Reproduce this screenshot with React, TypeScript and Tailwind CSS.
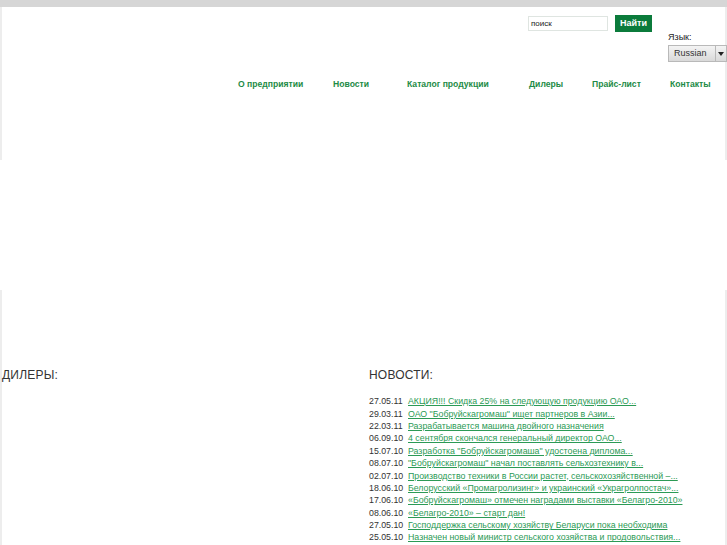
import React from 'react';

const navItems = [
  { label: 'О предприятии', w: 'w-[95px]' },
  { label: 'Новости', w: 'w-[74px]' },
  { label: 'Каталог продукции', w: 'w-[122px]' },
  { label: 'Дилеры', w: 'w-[63px]' },
  { label: 'Прайс-лист', w: 'w-[78px]' },
  { label: 'Контакты', w: 'w-[55px]' },
];

const news = [
  ['27.05.11', 'АКЦИЯ!!! Скидка 25% на следующую продукцию ОАО...'],
  ['29.03.11', 'ОАО "Бобруйскагромаш" ищет партнеров в Азии...'],
  ['22.03.11', 'Разрабатывается машина двойного назначения '],
  ['06.09.10', '4 сентября скончался генеральный директор ОАО...'],
  ['15.07.10', 'Разработка "Бобруйскагромаша" удостоена диплома...'],
  ['08.07.10', '"Бобруйскагромаш" начал поставлять сельхозтехнику в...'],
  ['02.07.10', 'Производство техники в России растет, сельскохозяйственной –...'],
  ['18.06.10', 'Белорусский «Промагролизинг» и украинский «Украгролпостач»...'],
  ['17.06.10', '«Бобруйскагромаш» отмечен наградами выставки «Белагро-2010» '],
  ['08.06.10', '«Белагро-2010» – старт дан!'],
  ['27.05.10', 'Господдержка сельскому хозяйству Беларуси пока необходима '],
  ['25.05.10', 'Назначен новый министр сельского хозяйства и продовольствия...'],
  ['14.05.10', '«Бобруйскагромаш» на выставке в Минске...'],
];

export default function App() {
  return (
    <div className="min-h-screen bg-[#ededed] font-['Liberation_Sans',Arial,sans-serif] text-[#333]">
      {/* верхняя полоса */}
      <div className="h-[7px] bg-[#d6d6d6]" />

      {/* шапка */}
      <div className="mx-[2px] h-[153px] bg-white">
        <div className="flex items-start justify-end">
          <div className="mt-[9px] flex items-start">
            <input
              defaultValue="поиск"
              className="h-[15px] w-[80px] border border-[#dfe5e1] bg-white px-[2px] text-[8px] text-[#222] outline-none"
            />
            <button className="ml-[7px] mt-[-1px] h-[17px] w-[37px] bg-[#0b7b3b] text-[9px] font-bold text-white">
              Найти
            </button>
          </div>
          <div className="ml-[16px] mt-[24px] w-[57px]">
            <div className="h-[12px] text-[9px] leading-[12px] text-[#222]">Язык:</div>
            <div className="mt-[2px] flex h-[17px] w-[59px] border border-[#b9b9b9] bg-gradient-to-b from-[#f4f4f4] to-[#d9d9d9] text-[9px] text-[#333]">
              <span className="flex flex-1 items-center pl-[5px]">Russian</span>
              <span className="flex w-[11px] items-center justify-center border-l border-[#b9b9b9]">
                <svg width="6" height="4" viewBox="0 0 6 4">
                  <path d="M0 0h6L3 4z" fill="#222" />
                </svg>
              </span>
            </div>
          </div>
        </div>

        <nav className="mt-[16px] flex pl-[236px]">
          {navItems.map((n) => (
            <a
              key={n.label}
              href="#"
              className={`${n.w} shrink-0 text-[8.6px] font-bold leading-[12px] text-[#1d8b46]`}
            >
              {n.label}
            </a>
          ))}
        </nav>
      </div>

      {/* баннер */}
      <div className="h-[130px] bg-white" />

      {/* контент */}
      <div className="mx-[2px] flex bg-white pt-[78px]">
        <div className="w-[367px]">
          <h2 className="text-[12px] leading-[14px] tracking-[0.2px] text-[#333]">ДИЛЕРЫ:</h2>
        </div>
        <div className="flex-1">
          <h2 className="text-[12px] leading-[14px] tracking-[0.2px] text-[#333]">НОВОСТИ:</h2>
          <ul className="mt-[13px]">
            {news.map(([d, t]) => (
              <li key={d + t} className="flex h-[12.4px] items-center text-[8.8px] leading-[12px]">
                <span className="w-[39px] shrink-0 text-[#333]">{d}</span>
                <a href="#" className="whitespace-nowrap text-[#2b9a55] underline">
                  {t}
                </a>
              </li>
            ))}
          </ul>
        </div>
      </div>
    </div>
  );
}
